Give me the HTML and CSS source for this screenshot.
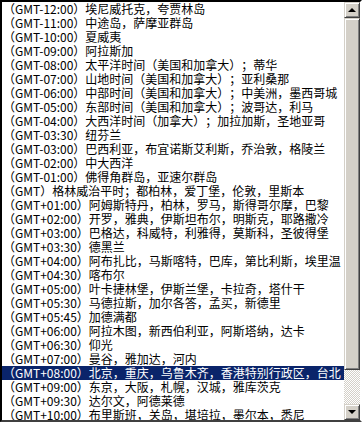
FILE: index.html
```html
<!DOCTYPE html>
<html lang="zh-CN">
<head>
    <meta charset="UTF-8">
    <title>时区</title>
    <link rel="stylesheet" href="styles.css">
</head>
<body>
    <div class="listbox">
        <ul class="items">
            <li>（GMT-12:00）埃尼威托克，夸贾林岛</li>
            <li>（GMT-11:00）中途岛，萨摩亚群岛</li>
            <li>（GMT-10:00）夏威夷</li>
            <li>（GMT-09:00）阿拉斯加</li>
            <li>（GMT-08:00）太平洋时间（美国和加拿大）；蒂华</li>
            <li>（GMT-07:00）山地时间（美国和加拿大）；亚利桑那</li>
            <li>（GMT-06:00）中部时间（美国和加拿大）；中美洲，墨西哥城</li>
            <li>（GMT-05:00）东部时间（美国和加拿大）；波哥达，利马</li>
            <li>（GMT-04:00）大西洋时间（加拿大）；加拉加斯，圣地亚哥</li>
            <li>（GMT-03:30）纽芬兰</li>
            <li>（GMT-03:00）巴西利亚，布宜诺斯艾利斯，乔治敦，格陵兰</li>
            <li>（GMT-02:00）中大西洋</li>
            <li>（GMT-01:00）佛得角群岛，亚速尔群岛</li>
            <li>（GMT）格林威治平时；都柏林，爱丁堡，伦敦，里斯本</li>
            <li>（GMT+01:00）阿姆斯特丹，柏林，罗马，斯得哥尔摩，巴黎</li>
            <li>（GMT+02:00）开罗，雅典，伊斯坦布尔，明斯克，耶路撒冷</li>
            <li>（GMT+03:00）巴格达，科威特，利雅得，莫斯科，圣彼得堡</li>
            <li>（GMT+03:30）德黑兰</li>
            <li>（GMT+04:00）阿布扎比，马斯喀特，巴库，第比利斯，埃里温</li>
            <li>（GMT+04:30）喀布尔</li>
            <li>（GMT+05:00）叶卡捷林堡，伊斯兰堡，卡拉奇，塔什干</li>
            <li>（GMT+05:30）马德拉斯，加尔各答，孟买，新德里</li>
            <li>（GMT+05:45）加德满都</li>
            <li>（GMT+06:00）阿拉木图，新西伯利亚，阿斯塔纳，达卡</li>
            <li>（GMT+06:30）仰光</li>
            <li>（GMT+07:00）曼谷，雅加达，河内</li>
            <li class="selected">（GMT+08:00）北京，重庆，乌鲁木齐，香港特别行政区，台北</li>
            <li>（GMT+09:00）东京，大阪，札幌，汉城，雅库茨克</li>
            <li>（GMT+09:30）达尔文，阿德莱德</li>
            <li>（GMT+10:00）布里斯班，关岛，堪培拉，墨尔本，悉尼</li>
        </ul>
        <div class="scrollbar">
            <div class="btn"><span class="arrow up"></span></div>
            <div class="thumb"></div>
            <div class="track"></div>
            <div class="btn"><span class="arrow down"></span></div>
        </div>
    </div>
</body>
</html>
```

FILE: styles.css
```css
body {
    margin: 0;
    background: #fff;
}

.listbox {
    width: 362px;
    height: 422px;
    box-sizing: border-box;
    display: flex;
    border-top: 2px solid #000;
    border-left: 2px solid #000;
    border-right: 2px solid #fff;
    border-bottom: 2px solid #404040;
    background: #fff;
    font-family: "Noto Sans CJK SC", "DejaVu Sans", sans-serif;
    font-size: 12px;
    color: #000;
    overflow: hidden;
}

.items {
    flex: 1;
    list-style: none;
    margin: 0;
    padding: 0;
    overflow: hidden;
    text-spacing-trim: space-all;
}

.items li {
    height: 14px;
    line-height: 14px;
    padding-left: 1px;
    white-space: nowrap;
}

.items li.selected {
    background: #0a246a;
    color: #fff;
}

.scrollbar {
    width: 16px;
    display: flex;
    flex-direction: column;
}

.btn, .thumb {
    box-sizing: border-box;
    background: #d4d0c8;
    border-top: 1px solid #d4d0c8;
    border-left: 1px solid #d4d0c8;
    border-right: 1px solid #404040;
    border-bottom: 1px solid #404040;
    box-shadow: inset 1px 1px 0 #fff, inset -1px -1px 0 #808080;
}

.btn {
    height: 16px;
    display: flex;
    align-items: center;
    justify-content: center;
}

.thumb {
    height: 352px;
}

.track {
    flex: 1;
    background-color: #fff;
    background-image: conic-gradient(#d4d0c8 25%, #fff 0 50%, #d4d0c8 0 75%, #fff 0);
    background-size: 2px 2px;
}

.arrow {
    width: 0;
    height: 0;
    border-left: 4px solid transparent;
    border-right: 4px solid transparent;
}

.arrow.up {
    border-bottom: 4px solid #000;
}

.arrow.down {
    border-top: 4px solid #000;
}
```
